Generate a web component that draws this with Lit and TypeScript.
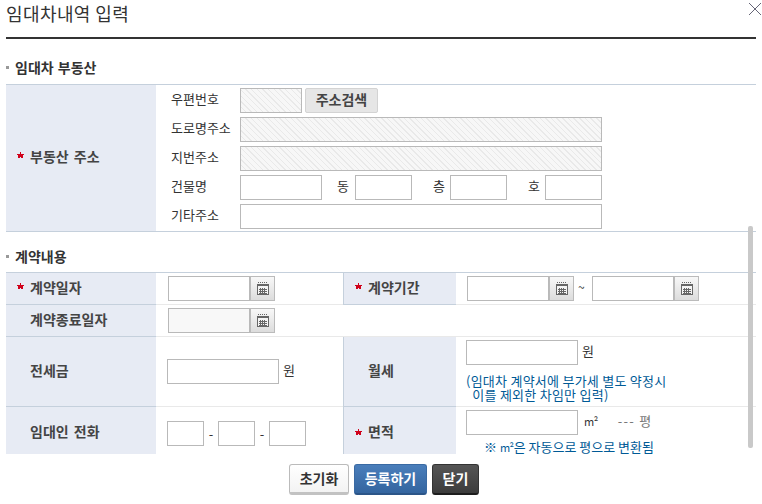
import { LitElement, html, css } from "lit";
import { customElement } from "lit/decorators.js";

const cal = html`<svg width="12" height="13" viewBox="0 0 12 13" shape-rendering="crispEdges">
  <path d="M1 0.5h10" stroke="#666" stroke-dasharray="1 1" fill="none"/>
  <path d="M0.5 2.5h11v10h-11z" fill="#f4f4f4" stroke="#666"/>
  <path d="M0 2h12v2H0z" fill="#666"/>
  <path d="M2 7h8M2 9h8M2 11h8" stroke="#666" fill="none"/>
  <path d="M3.5 6v5M5.5 6v5M7.5 6v5" stroke="#666" fill="none"/>
</svg>`;

const star = html`<i class="star"><svg width="7" height="6" viewBox="0 0 7 6" shape-rendering="crispEdges"><path d="M3 0h1v2h3v1H6v3H4V5H3v1H1V3H0V2h3z" fill="#d0021b"/></svg></i>`;

@customElement("app-root")
export class AppRoot extends LitElement {
  static styles = css`
    :host {
      display: block;
      width: 762px;
      height: 504px;
      position: relative;
      overflow: hidden;
      background: #fff;
      font-family: "Noto Sans CJK KR", "Liberation Sans", sans-serif;
      font-size: 13px;
      color: #333;
      box-sizing: border-box;
    }
    * { box-sizing: border-box; }
    .head {
      margin: 0 6px;
      height: 39px;
      border-bottom: 2px solid #333;
      font-size: 18px;
      line-height: 26px;
      color: #333;
      font-weight: 400;
      letter-spacing: 0.4px;
    }
    .close {
      position: absolute;
      right: 1px;
      top: 3px;
      width: 12px;
      height: 12px;
    }
    .scroll {
      height: 415px;
      padding: 18px 6px 0;
    }
    .sec {
      display: flex;
      align-items: center;
      gap: 6px;
      font-size: 14px;
      font-weight: 700;
      color: #333;
      line-height: 20px;
      height: 20px;
      word-spacing: 1px;
    }
    .sec::before {
      content: "";
      width: 3px;
      height: 3px;
      background: #999;
    }
    .s1 { height: 27px; padding-bottom: 7px; }
    .s2 { margin-top: 14px; height: 26px; padding-bottom: 6px; }
    .grid {
      display: grid;
      grid-template-columns: 151px 186px 113px 300px;
      border-top: 1px solid #c5d0dc;
    }
    .g1 { grid-template-columns: 151px 599px; height: 148px; border-bottom: 1px solid #c5d0dc; }
    .th {
      background: #e7ebf4;
      display: flex;
      align-items: center;
      font-size: 14px;
      font-weight: 700;
      color: #444;
      padding: 0 0 4px 24px;
      position: relative;
      border-bottom: 1px solid #c5d0dc;
      border-right: 1px solid #fff;
      word-spacing: 2px;
    }
    .g1 .th { border-bottom: 0; }
    .th.mid {
      border-left: 1px solid #c5d0dc;
      border-right: 0;
    }
    .star {
      position: absolute;
      left: 11px;
      top: 50%;
      margin-top: -6px;
      display: block;
      line-height: 0;
    }
    .th.top { align-items: flex-start; padding-top: 14px; padding-bottom: 0; height: 47px; border-bottom: 0; }
    .th.top .star { top: 22px; margin-top: 0; }
    .td {
      border-bottom: 1px solid #e9e9e9;
      display: flex;
      align-items: center;
      min-width: 0;
      padding-left: 10px;
    }
    .td.last { border-bottom: 0; }
    .date-cell { padding-left: 11px; }
    .wide { grid-column: span 3; }
    .addr {
      display: flex;
      flex-direction: column;
      gap: 4px;
      padding: 3px 0 0 14px;
    }
    .ar {
      display: flex;
      align-items: center;
      height: 25px;
    }
    .lbl { width: 69px; flex: none; padding-bottom: 4px; }
    input, .in {
      display: block;
      flex: none;
      height: 25px;
      border: 1px solid #b9b9b9;
      background: #fff;
      padding: 0;
      margin: 0;
      border-radius: 0;
      outline: none;
    }
    .hatch {
      background: repeating-linear-gradient(45deg, #f7f7f7 0, #f7f7f7 3px, #e9e9e9 3px, #e9e9e9 4px);
    }
    .w62 { width: 62px; }
    .w362 { width: 362px; }
    .w82 { width: 82px; }
    .w57 { width: 57px; }
    .btn-s {
      flex: none;
      margin-left: 3px;
      width: 73px;
      height: 25px;
      border: 1px solid #d3d3d3;
      border-radius: 2px;
      background: #e6e6e6;
      font: 700 14px/19px "Noto Sans CJK KR", sans-serif;
      color: #444;
      padding: 0 0 2px;
    }
    .unit { flex: none; padding-bottom: 4px; }
    .u15 { width: 33px; padding-left: 15px; }
    .u21 { width: 38px; padding-left: 21px; }
    .date { display: flex; flex: none; }
    .date .in { width: 82px; }
    .off { background: #f8f8f8; }
    .cal {
      width: 25px;
      height: 25px;
      border: 1px solid #bbb;
      background: linear-gradient(#f8f8f8, #dcdcdc);
      display: flex;
      align-items: center;
      justify-content: center;
      padding: 0;
      flex: none;
    }
    .tilde { width: 18px; padding: 0 0 4px 4px; flex: none; font-size: 12px; }
    .rowh1 { height: 32px; }
    .rowh2 { height: 70px; }
    .w112 { width: 112px; }
    .w37 { width: 37px; }
    .dash { width: 14px; text-align: center; flex: none; color: #333; padding-bottom: 4px; }
    .tel { align-items: flex-start; padding-top: 14px; }
    .tel .dash { line-height: 25px; }
    .stack {
      display: flex;
      flex-direction: column;
      align-items: flex-start;
      padding-top: 3px;
    }
    .line { display: flex; align-items: center; height: 25px; }
    .after { margin-left: 4px; padding-bottom: 4px; }
    .note {
      color: #005a96;
      font-size: 13px;
      line-height: 14px;
      white-space: pre;
      letter-spacing: 0.25px;
    }
    .note.n1 { margin-top: 9px; }
    .note.n3 { margin-top: 5px; margin-left: 18px; line-height: 13px; letter-spacing: 0; }
    .sq { font-size: 11px; letter-spacing: -0.5px; }
    .pyeong { color: #777; margin-left: 20px; padding-bottom: 4px; }
    .dashes { letter-spacing: 1.3px; margin-right: 4px; }
    .m2 { margin-left: 6px; padding-bottom: 4px; }
    .foot {
      height: 50px;
      display: flex;
      justify-content: center;
      align-items: flex-start;
      gap: 5px;
      padding: 10px 0 0 6px;
    }
    .b {
      height: 31px;
      border-radius: 3px;
      font: 700 14px/24px "Noto Sans CJK KR", sans-serif;
      padding: 0 0 2px;
    }
    .b1 { width: 60px; background: linear-gradient(#fff, #f3f3f3); border: 1px solid #bbb; border-bottom: 3px solid #c2c2c2; color: #333; }
    .b2 { width: 73px; background: linear-gradient(#4a7ebb, #34659f); border: 1px solid #3a6aa3; border-bottom: 2px solid #2b5588; color: #fff; }
    .b3 { width: 47px; background: linear-gradient(#555, #3c3c3c); border: 1px solid #333; border-bottom: 2px solid #1d1d1d; color: #fff; }
    .thumb {
      position: absolute;
      left: 748px;
      top: 226px;
      width: 5px;
      height: 222px;
      border-radius: 2px;
      background: #c9c9c9;
    }
  `;

  private date(off = false) {
    return html`<div class="date"><div class="in ${off ? "off" : ""}"></div><button class="cal" aria-label="달력">${cal}</button></div>`;
  }

  render() {
    return html`
      <div class="head">임대차내역 입력</div>
      <svg class="close" viewBox="0 0 12 12"><path d="M0 0l12 12M12 0L0 12" stroke="#667" stroke-width="1" fill="none"/></svg>
      <div class="scroll">
        <div class="sec s1">임대차 부동산</div>
        <div class="grid g1">
          <div class="th">${star}부동산 주소</div>
          <div class="addr">
            <div class="ar"><span class="lbl">우편번호</span><div class="in hatch w62"></div><button class="btn-s">주소검색</button></div>
            <div class="ar"><span class="lbl">도로명주소</span><div class="in hatch w362"></div></div>
            <div class="ar"><span class="lbl">지번주소</span><div class="in hatch w362"></div></div>
            <div class="ar"><span class="lbl">건물명</span><input class="w82" /><span class="unit u15">동</span><input class="w57" /><span class="unit u21">층</span><input class="w57" /><span class="unit u21">호</span><input class="w57" /></div>
            <div class="ar"><span class="lbl">기타주소</span><input class="w362" /></div>
          </div>
        </div>
        <div class="sec s2">계약내용</div>
        <div class="grid">
          <div class="th rowh1">${star}계약일자</div>
          <div class="td date-cell">${this.date()}</div>
          <div class="th mid">${star}계약기간</div>
          <div class="td date-cell">${this.date()}<span class="tilde">~</span>${this.date()}</div>

          <div class="th rowh1">계약종료일자</div>
          <div class="td wide date-cell">${this.date(true)}</div>

          <div class="th rowh2">전세금</div>
          <div class="td"><input class="w112" /><span class="after">원</span></div>
          <div class="th mid">월세</div>
          <div class="td stack">
            <div class="line"><input class="w112" /><span class="after">원</span></div>
            <div class="note n1">(임대차 계약서에 부가세 별도 약정시
  이를 제외한 차임만 입력)</div>
          </div>

          <div class="th top">임대인 전화</div>
          <div class="td tel last"><input class="w37" /><span class="dash">-</span><input class="w37" /><span class="dash">-</span><input class="w37" /></div>
          <div class="th mid top">${star}면적</div>
          <div class="td stack last">
            <div class="line"><input class="w112" /><span class="m2 sq">m²</span><span class="pyeong"><span class="dashes">---</span>평</span></div>
            <div class="note n3">※ <span class="sq">m²</span>은 자동으로 평으로 변환됨</div>
          </div>
        </div>
      </div>
      <div class="foot">
        <button class="b b1">초기화</button>
        <button class="b b2">등록하기</button>
        <button class="b b3">닫기</button>
      </div>
      <div class="thumb"></div>
    `;
  }
}
